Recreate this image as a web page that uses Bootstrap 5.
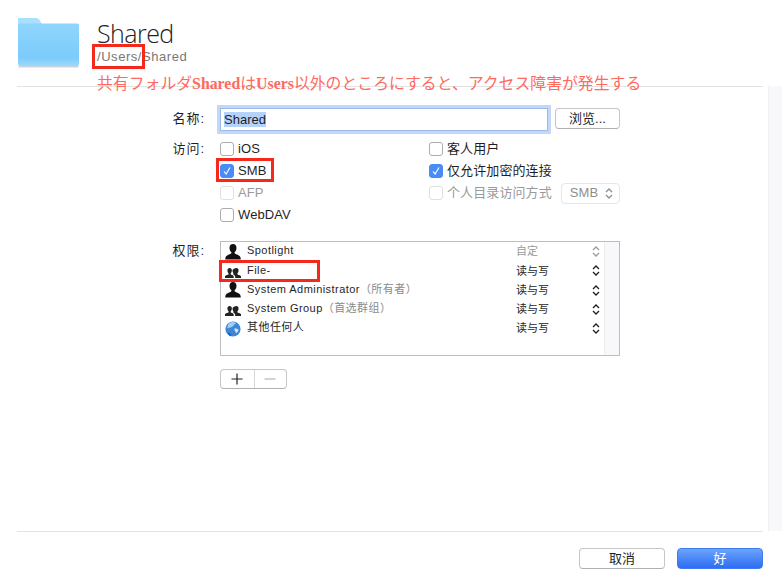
<!DOCTYPE html>
<html lang="zh-CN">

<head>
    <meta charset="UTF-8">
    <meta name="viewport" content="width=device-width, initial-scale=1.0">
    <title>Shared</title>
    <link rel="stylesheet" href="https://cdn.jsdelivr.net/npm/bootstrap@5.3.0/dist/css/bootstrap.min.css">
    <style>
        html, body { height: 100%; }
        body {
            background: #fff;
            color: #1f1f1f;
            font-family: "Liberation Sans", "Noto Sans CJK SC", sans-serif;
            font-size: 13px;
            overflow: hidden;
        }
        .sheet { position: relative; width: 782px; height: 584px; padding: 17px 19px 0 17px; }
        .side-strip { position: absolute; right: 0; top: 86px; width: 14px; height: 445px; background: #f8f8fb; border-left: 1px solid #f0f0f3; }
        .head-row { height: 70px; border-bottom: 1px solid #e3e3e3; gap: 17px; }
        .folder-ico { width: 63px; height: 51px; flex: none; }
        .share-title { font-family: "Open Sans", sans-serif; font-weight: 300; font-size: 25px; line-height: 30px; margin-top: 1px; letter-spacing: -.55px; color: #222; }
        .share-path { font-size: 13px; line-height: 16px; margin-top: 1px; color: #777; letter-spacing: .55px; }
        .note-text { position: absolute; left: 97px; top: 74px; color: #ff6a60; font-family: "Liberation Serif", "Noto Sans CJK JP", serif; font-size: 15.85px; line-height: 20px; white-space: nowrap; }
        .red-box { position: absolute; border: 3px solid #f4291b; }
        .box-path { left: 92px; top: 44px; width: 53px; height: 25px; }
        .box-smb { left: 216px; top: 158px; width: 58px; height: 24px; }
        .box-file { left: 219px; top: 260px; width: 101px; height: 22px; }
        .form-area { padding-top: 21px; }
        .field-label { width: 203px; padding-right: 15px; text-align: right; flex: none; letter-spacing: 1px; }
        .name-label { padding-top: 1px; }
        .access-label { padding-top: 1px; }
        .name-input.form-control { width: 328px; height: 23px; padding: 0 3px; border: 1px solid #9dbbe6; border-radius: 0; box-shadow: 0 0 0 3px #c2d8f8; font-size: 13px; color: #1f1f1f; }
        .name-input::selection { background: #b5d2fa; color: #1f1f1f; }
        .mac-btn.btn { height: 21px; padding: 0; font-size: 13px; line-height: 19px; background: #fff; border: 1px solid #c6c6c6; border-bottom-color: #b0b0b0; border-radius: 4px; color: #1f1f1f; }
        .browse-btn.btn { width: 65px; margin-left: 7px; }
        .access-row { margin-top: 7px; }
        .access-col { width: 209px; flex: none; }
        .access-line { height: 22px; gap: 4px; letter-spacing: .1px; }
        .access-line .form-check-input { width: 14px; height: 14px; margin: 0; border: 1px solid #adadad; border-radius: 3px; flex: none; opacity: 1; }
        .access-line .form-check-input:checked {
            background-color: #4a8cf6;
            border-color: #4a8cf6;
            background-image: url("data:image/svg+xml,%3csvg xmlns='http://www.w3.org/2000/svg' viewBox='0 0 14 14'%3e%3cpath fill='none' stroke='%23fff' stroke-width='1.300' d='M3.500 7.500 6 10.500 10.500 3'/%3e%3c/svg%3e");
        }
        .is-off { color: #9a9a9a; }
        .access-line .form-check-input:disabled { border-color: #e0e0e0; }
        .smb-select { width: 59px; height: 21px; margin-left: 5px; padding: 0 6px 0 8px; border: 1px solid #e6e6e6; border-radius: 4px; color: #8e8e8e; }
        .perm-row { margin-top: 15px; }
        .perm-box { width: 400px; height: 115px; border: 1px solid #bdbdbd; }
        .perm-list { flex: 1 1 auto; font-size: 11px; letter-spacing: .45px; }
        .perm-strip { width: 15px; flex: none; background: #f8f8fb; border-left: 1px solid #ededf0; }
        .perm-line { height: 19.25px; padding-left: 4px; }
        .perm-ico { width: 16px; height: 16px; flex: none; margin-right: 6px; }
        .perm-name { margin-bottom: 2px; }
        .perm-note { color: #8a8a8a; }
        .perm-role { width: 76px; margin-left: auto; flex: none; letter-spacing: 0; }
        .perm-arrow { width: 8px; height: 11px; flex: none; margin-right: 4px; }
        .role-off { color: #9a9a9a; }
        .add-group { margin: 13px 0 0 203px; width: 67px; height: 20px; border: 1px solid #c6c6c6; border-bottom-color: #b0b0b0; border-radius: 4px; }
        .add-part { width: 33px; height: 100%; }
        .add-part + .add-part { border-left: 1px solid #d8d8d8; }
        .add-part svg { width: 12px; height: 12px; }
        .foot-row { position: absolute; left: 17px; right: 19px; top: 531px; border-top: 1px solid #e3e3e3; padding-top: 16px; gap: 12px; }
        .foot-btn.btn { width: 86px; }
        .ok-btn.btn { background: linear-gradient(#6aa5fb, #2f6cf3); border-color: #3f7bf2; color: #fff; }
    </style>
</head>

<body>
    <svg width="0" height="0" class="d-block">
        <defs>
            <symbol id="person" viewBox="0 0 16 16">
                <path fill="#111" d="M8 0c2.2 0 3.500 1.700 3.500 3.900 0 1.700-.8 3.300-1.800 4.200-.3.900 0 1.500 1 1.900 2.300.9 4.600 1.600 5 4.200v1.300H.3v-1.300c.4-2.600 2.700-3.300 5-4.200 1-.4 1.300-1 1-1.900-1-.9-1.800-2.500-1.800-4.200C4.500 1.700 5.800 0 8 0z"/>
            </symbol>
            <symbol id="group" viewBox="0 0 16 16">
                <path fill="#222" d="M4.600 5c1.400 0 2.300 1.100 2.300 2.600 0 1.100-.5 2.200-1.200 2.800-.2.600 0 1 .7 1.300 1 .4 1.900.7 2.300 1.600V15H0v-1.700c.4-1 1.700-1.300 2.900-1.600.7-.3.900-.7.700-1.300-.7-.6-1.200-1.700-1.200-2.800C2.400 6.100 3.200 5 4.600 5z"/>
                <path fill="#222" d="M11.400 5c1.400 0 2.200 1.100 2.200 2.600 0 1.100-.5 2.200-1.200 2.800-.2.600 0 1 .7 1.300 1.200.3 2.500.6 2.900 1.600V15H10.200v-1.500c-.3-1-1.300-1.600-2.300-2 .6-.2.700-.5.500-1.100-.5-.6-.9-1.700-.9-2.800C7.500 6.100 10 5 11.400 5z"/>
            </symbol>
            <symbol id="globe" viewBox="0 0 16 16">
                <circle cx="8" cy="8" r="7.600" fill="#3f86d8"/>
                <path fill="#9fd0f5" d="M5 1.500c2-.9 4.500-.7 6 .4-.5 1-1.500 1.300-2.300 1.800.3.800-.4 1.500-1.400 1.700-.9.300-1 1.300-2 1.200-1-.1-1.700.8-3 .5C2.500 4.800 3.400 2.600 5 1.500z"/>
                <path fill="#cfe8fa" d="M9.500 7.500c1.500-.4 3.400.2 4 1.300-.2 1.500-1.200 2.800-2.400 3.400-.5-.9-.4-1.600-1-2.200-.6-.6-1-1.800-.6-2.500z"/>
                <path fill="#1f5fae" d="M3 11.500c1.500.1 2.600.8 3.300 2.500-.3.600-.4.900-.8 1.200-1.300-.5-2.500-2-2.500-3.700z"/>
            </symbol>
            <symbol id="updown" viewBox="0 0 8 11">
                <path fill="none" stroke="currentColor" stroke-width="1.300" d="M1 4 4 1l3 3M1 7l3 3 3-3"/>
            </symbol>
        </defs>
    </svg>

    <div class="sheet">
        <div class="side-strip"></div>

        <div class="head-row d-flex">
            <svg class="folder-ico" viewBox="0 0 63 51">
                <defs>
                    <linearGradient id="folderFill" x1="0" y1="0" x2="0" y2="1">
                        <stop offset="0" stop-color="#8fd6fd"/>
                        <stop offset=".8" stop-color="#7ccbfa"/>
                        <stop offset="1" stop-color="#9adafc"/>
                    </linearGradient>
                </defs>
                <path fill="#a9e0fe" d="M2 1h17c2 0 3 1 4 3l2 3h35c1 0 2 1 2 2v8H1V2c0-1 0-1 1-1z"/>
                <rect x="1" y="6.500" width="61" height="42.500" rx="2" fill="url(#folderFill)"/>
                <rect x="1.500" y="49" width="60" height="1.500" fill="#c9d3da"/>
            </svg>
            <div>
                <div class="share-title">Shared</div>
                <div class="share-path">/Users/Shared</div>
            </div>
        </div>
        <div class="note-text">共有フォルダ<b>Shared</b>は<b>Users</b>以外のところにすると、アクセス障害が発生する</div>

        <div class="form-area">
            <div class="d-flex align-items-start">
                <div class="field-label name-label">名称:</div>
                <input type="text" class="name-input form-control" value="Shared" aria-label="名称">
                <button type="button" class="mac-btn browse-btn btn">浏览...</button>
            </div>

            <div class="access-row d-flex">
                <div class="field-label access-label">访问:</div>
                <div class="access-col">
                    <label class="access-line d-flex align-items-center"><input class="form-check-input" type="checkbox">iOS</label>
                    <label class="access-line d-flex align-items-center"><input class="form-check-input" type="checkbox" checked>SMB</label>
                    <label class="access-line d-flex align-items-center is-off"><input class="form-check-input" type="checkbox" disabled>AFP</label>
                    <label class="access-line d-flex align-items-center"><input class="form-check-input" type="checkbox">WebDAV</label>
                </div>
                <div>
                    <label class="access-line d-flex align-items-center"><input class="form-check-input" type="checkbox">客人用户</label>
                    <label class="access-line d-flex align-items-center"><input class="form-check-input" type="checkbox" checked>仅允许加密的连接</label>
                    <div class="access-line d-flex align-items-center is-off">
                        <input class="form-check-input" type="checkbox" disabled aria-label="个人目录访问方式">个人目录访问方式
                        <div class="smb-select d-flex align-items-center justify-content-between">SMB
                            <svg class="perm-arrow m-0"><use href="#updown"/></svg>
                        </div>
                    </div>
                </div>
            </div>

            <div class="perm-row d-flex">
                <div class="field-label">权限:</div>
                <div class="perm-box d-flex">
                    <div class="perm-list">
                        <div class="perm-line d-flex align-items-center">
                            <svg class="perm-ico"><use href="#person"/></svg><span class="perm-name">Spotlight</span>
                            <span class="perm-role role-off">自定</span>
                            <svg class="perm-arrow role-off"><use href="#updown"/></svg>
                        </div>
                        <div class="perm-line d-flex align-items-center">
                            <svg class="perm-ico"><use href="#group"/></svg><span class="perm-name">File-</span>
                            <span class="perm-role">读与写</span>
                            <svg class="perm-arrow"><use href="#updown"/></svg>
                        </div>
                        <div class="perm-line d-flex align-items-center">
                            <svg class="perm-ico"><use href="#person"/></svg><span class="perm-name">System Administrator<span class="perm-note">（所有者）</span></span>
                            <span class="perm-role">读与写</span>
                            <svg class="perm-arrow"><use href="#updown"/></svg>
                        </div>
                        <div class="perm-line d-flex align-items-center">
                            <svg class="perm-ico"><use href="#group"/></svg><span class="perm-name">System Group<span class="perm-note">（首选群组）</span></span>
                            <span class="perm-role">读与写</span>
                            <svg class="perm-arrow"><use href="#updown"/></svg>
                        </div>
                        <div class="perm-line d-flex align-items-center">
                            <svg class="perm-ico"><use href="#globe"/></svg><span class="perm-name">其他任何人</span>
                            <span class="perm-role">读与写</span>
                            <svg class="perm-arrow"><use href="#updown"/></svg>
                        </div>
                    </div>
                    <div class="perm-strip"></div>
                </div>
            </div>

            <div class="add-group d-flex">
                <div class="add-part d-flex align-items-center justify-content-center">
                    <svg viewBox="0 0 12 12"><path stroke="#222" stroke-width="1.200" d="M6 .5v11M.5 6h11"/></svg>
                </div>
                <div class="add-part d-flex align-items-center justify-content-center">
                    <svg viewBox="0 0 12 12"><path stroke="#b5b5b5" stroke-width="1.200" d="M.5 6h11"/></svg>
                </div>
            </div>
        </div>

        <div class="foot-row d-flex justify-content-end">
            <button type="button" class="mac-btn foot-btn btn">取消</button>
            <button type="button" class="mac-btn foot-btn ok-btn btn">好</button>
        </div>

        <div class="red-box box-path"></div>
        <div class="red-box box-smb"></div>
        <div class="red-box box-file"></div>
    </div>

    <script>
        // select the name field text, as the sheet shows it on open
        const nameField = document.querySelector('.name-input');
        nameField.focus();
        nameField.select();
    </script>
    <script src="https://cdn.jsdelivr.net/npm/bootstrap@5.3.0/dist/js/bootstrap.bundle.min.js"></script>
</body>

</html>
